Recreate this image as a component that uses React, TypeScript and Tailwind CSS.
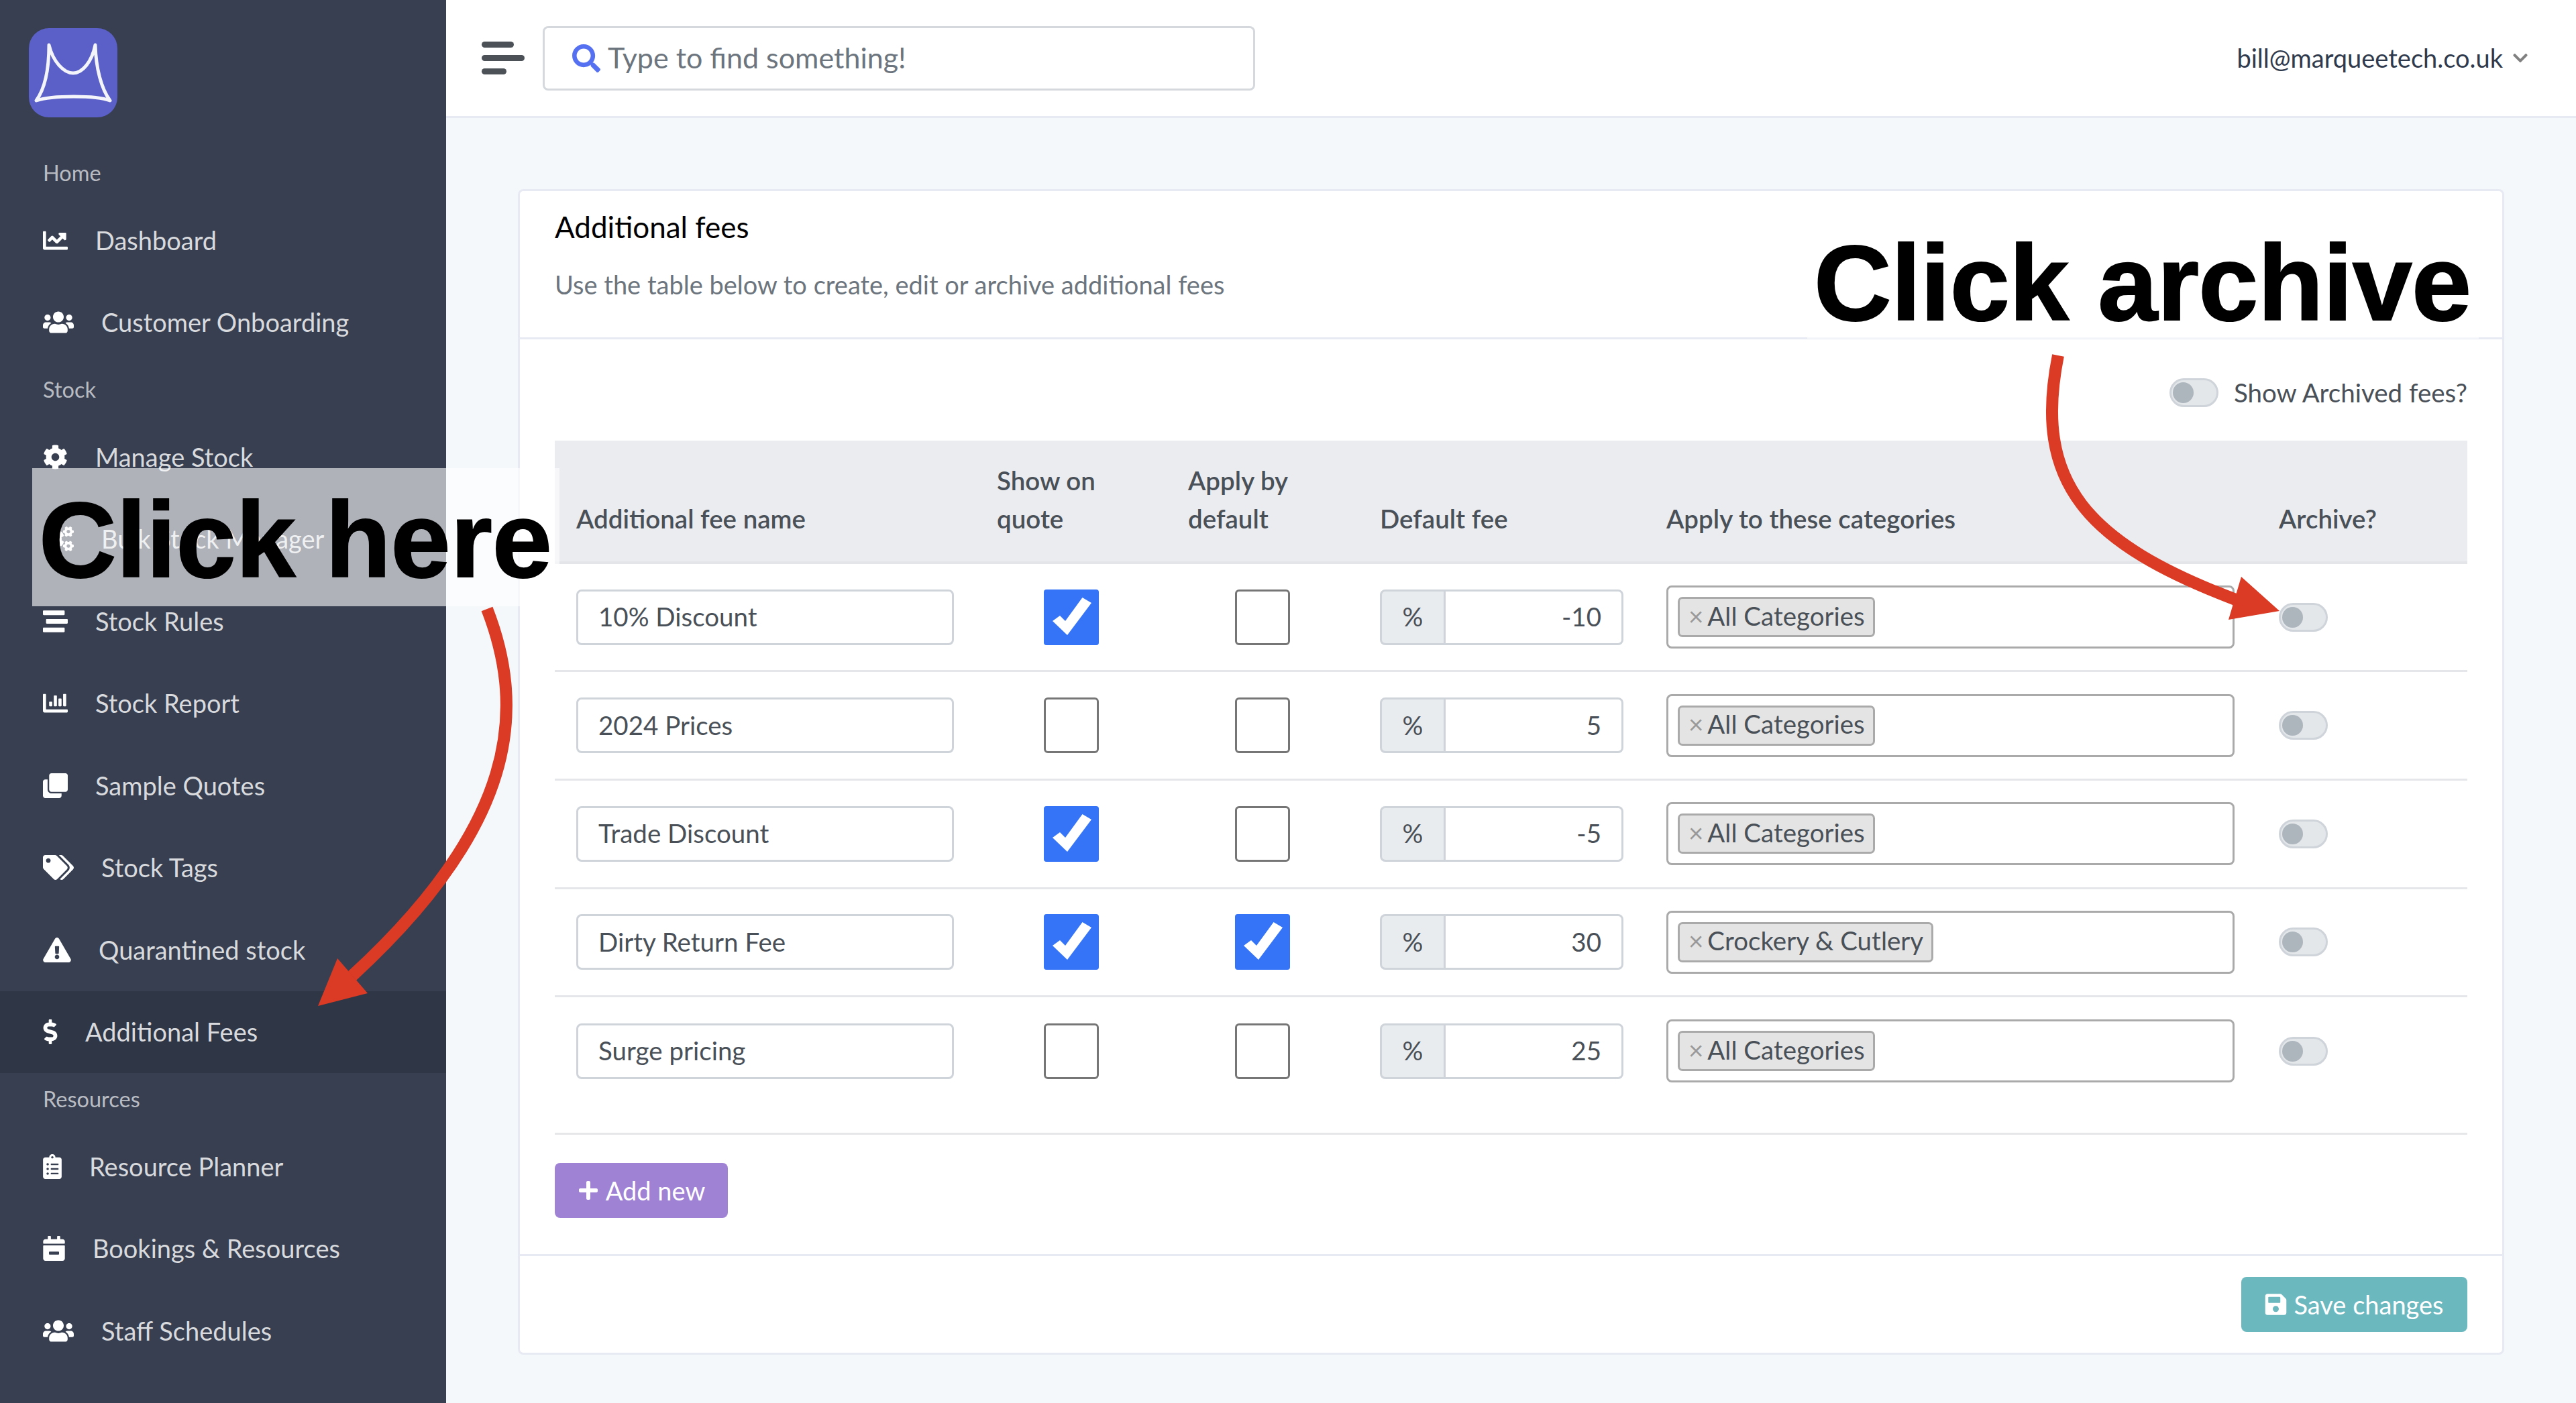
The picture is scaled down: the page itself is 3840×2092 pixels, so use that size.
import React from "react";
import {
	FaCalendarMinus,
	FaChartBar,
	FaChartLine,
	FaChevronDown,
	FaClipboardList,
	FaClone,
	FaCog,
	FaCogs,
	FaDollarSign,
	FaExclamationTriangle,
	FaPlus,
	FaSave,
	FaSearch,
	FaStream,
	FaTags,
	FaUsers,
} from "react-icons/fa";

type NavEntry =
	| { section: string }
	| {
			label: string;
			icon: React.ComponentType<{ className?: string }>;
			iconWidth: string;
			active?: boolean;
	  };

const nav: NavEntry[] = [
	{ section: "Home" },
	{ label: "Dashboard", icon: FaChartLine, iconWidth: "w-[37px]" },
	{ label: "Customer Onboarding", icon: FaUsers, iconWidth: "w-[46px]" },
	{ section: "Stock" },
	{ label: "Manage Stock", icon: FaCog, iconWidth: "w-[37px]" },
	{ label: "Bulk Stock Manager", icon: FaCogs, iconWidth: "w-[46px]" },
	{ label: "Stock Rules", icon: FaStream, iconWidth: "w-[37px]" },
	{ label: "Stock Report", icon: FaChartBar, iconWidth: "w-[37px]" },
	{ label: "Sample Quotes", icon: FaClone, iconWidth: "w-[37px]" },
	{ label: "Stock Tags", icon: FaTags, iconWidth: "w-[46px]" },
	{ label: "Quarantined stock", icon: FaExclamationTriangle, iconWidth: "w-[42px]" },
	{ label: "Additional Fees", icon: FaDollarSign, iconWidth: "w-[22px]", active: true },
	{ section: "Resources" },
	{ label: "Resource Planner", icon: FaClipboardList, iconWidth: "w-[28px]" },
	{ label: "Bookings & Resources", icon: FaCalendarMinus, iconWidth: "w-[33px]" },
	{ label: "Staff Schedules", icon: FaUsers, iconWidth: "w-[46px]" },
];

const fees = [
	{ name: "10% Discount", quote: true, apply: false, fee: "-10", category: "All Categories" },
	{ name: "2024 Prices", quote: false, apply: false, fee: "5", category: "All Categories" },
	{ name: "Trade Discount", quote: true, apply: false, fee: "-5", category: "All Categories" },
	{ name: "Dirty Return Fee", quote: true, apply: true, fee: "30", category: "Crockery & Cutlery" },
	{ name: "Surge pricing", quote: false, apply: false, fee: "25", category: "All Categories" },
];

function Logo() {
	return (
		<svg viewBox="0 0 132 133" className="w-[132px] h-[133px]">
			<rect width="132" height="133" rx="30" fill="#5a60c7" />
			<path
				d="M30 25C36 50 52 67 66 67C80 67 94 50 99 25C100 60 108 90 121 108C100 100 35 100 11 108C24 90 30 60 30 25Z"
				fill="none"
				stroke="#f4f4fb"
				strokeWidth="5"
				strokeLinejoin="round"
			/>
		</svg>
	);
}

function Sidebar() {
	return (
		<aside className="w-[665px] shrink-0 bg-[#373f50]">
			<div className="h-[219px] pt-[42px] pl-[43px]">
				<Logo />
			</div>
			{nav.map((item) =>
				"section" in item ? (
					<div
						key={item.section}
						className="h-[78px] pl-[64px] flex items-center text-[32.5px] text-[#b9bcc3]"
					>
						{item.section}
					</div>
				) : (
					<div
						key={item.label}
						className={
							"h-[122.5px] pl-[64px] flex items-center gap-[41px] text-[38px] text-[#d8dade] " +
							(item.active ? "bg-[#2f3645]" : "")
						}
					>
						<item.icon className={"h-[37px] shrink-0 text-white " + item.iconWidth} />
						<span>{item.label}</span>
					</div>
				)
			)}
		</aside>
	);
}

function Toggle() {
	return (
		<div className="w-[73px] h-[43px] rounded-full border-[3px] border-[#ced4da] bg-[#e4e7ea] flex items-center pl-[2px]">
			<div className="w-[31px] h-[31px] rounded-full bg-[#adb5bd]" />
		</div>
	);
}

function Checkbox({ checked }: { checked: boolean }) {
	if (checked) {
		return (
			<div className="w-[82px] h-[83px] mx-auto rounded-[4px] bg-[#3574f6]">
				<svg viewBox="0 0 82 83" className="w-[82px] h-[83px]">
					<path d="M13 47L35 68L71 20L57.5 12L32 47L24 39Z" fill="#fff" />
				</svg>
			</div>
		);
	}
	return <div className="w-[82px] h-[83px] mx-auto rounded-[6px] border-[3px] border-[#767676] bg-white" />;
}

function FeeRow({ fee }: { fee: (typeof fees)[number] }) {
	return (
		<tr className="h-[161.6px] border-b-[3px] border-[#e4e6e9] last:border-b-0 text-[38.5px]">
			<td className="px-[32px]">
				<div className="w-[563px] h-[83px] rounded-[8px] border-[3px] border-[#ced4da] pl-[30px] flex items-center text-[#495057]">
					{fee.name}
				</div>
			</td>
			<td>
				<Checkbox checked={fee.quote} />
			</td>
			<td>
				<Checkbox checked={fee.apply} />
			</td>
			<td className="px-[32px]">
				<div className="flex w-[363px] h-[83px] text-[#495057]">
					<div className="w-[98px] rounded-l-[8px] border-[3px] border-[#ced4da] bg-[#e9ecef] flex items-center justify-center">
						%
					</div>
					<div className="flex-1 rounded-r-[8px] border-[3px] border-l-0 border-[#ced4da] pr-[30px] flex items-center justify-end">
						{fee.fee}
					</div>
				</div>
			</td>
			<td className="px-[32px]">
				<div className="w-[847px] h-[94px] rounded-[8px] border-[3px] border-[#aaaaaa] pl-[14px] flex items-center">
					<div className="h-[60px] pl-[13px] pr-[12px] pb-[3px] rounded-[7px] border-[3px] border-[#aaaaaa] bg-[#e4e4e4] flex items-center gap-[6px] text-[38.5px] text-[#495057]">
						<span className="text-[#999999]">×</span>
						{fee.category}
					</div>
				</div>
			</td>
			<td className="px-[32px]">
				<Toggle />
			</td>
		</tr>
	);
}

function FeesCard() {
	return (
		<section className="rounded-[8px] border-[3px] border-[#e8eaf3] bg-white">
			<div className="h-[221px] border-b-[3px] border-[#e8eaf3] px-[52px] pt-[26px]">
				<h1 className="text-[44px] leading-[54px] text-black">Additional fees</h1>
				<p className="mt-[32px] text-[#6c757d] leading-[54px]">
					Use the table below to create, edit or archive additional fees
				</p>
			</div>
			<div className="px-[52px] pt-[51px] pb-[54px]">
				<div className="flex items-center justify-end gap-[23px] text-[38.5px] text-[#495057]">
					<Toggle />
					<span>Show Archived fees?</span>
				</div>
				<table className="mt-[42px] w-[2851px] table-fixed border-collapse">
					<thead>
						<tr className="h-[182.5px] bg-[#ebecf0] border-b-[4px] border-[#e3e5e9] text-left align-bottom text-[38.5px] text-[#495057] leading-[57px]">
							<th className="w-[627px] px-[32px] pb-[35px] font-semibold">Additional fee name</th>
							<th className="w-[285px] px-[32px] pb-[35px] font-semibold">
								Show on
								<br />
								quote
							</th>
							<th className="w-[286px] px-[32px] pb-[35px] font-semibold">
								Apply by
								<br />
								default
							</th>
							<th className="w-[427px] px-[32px] pb-[35px] font-semibold">Default fee</th>
							<th className="w-[913px] px-[32px] pb-[35px] font-semibold">Apply to these categories</th>
							<th className="w-[313px] px-[32px] pb-[35px] font-semibold">Archive?</th>
						</tr>
					</thead>
					<tbody>
						{fees.map((fee) => (
							<FeeRow key={fee.name} fee={fee} />
						))}
					</tbody>
				</table>
				<div className="mt-[42px] border-t-[3px] border-[#e5e7e9] pt-[42px]">
					<button className="w-[258px] h-[82px] rounded-[8px] bg-[#a082d5] text-white flex items-center justify-center gap-[10px]">
						<FaPlus className="h-[32px] w-[32px]" />
						Add new
					</button>
				</div>
			</div>
			<div className="border-t-[3px] border-[#e8eaf3] px-[52px] py-[31px] flex justify-end">
				<button className="w-[337px] h-[82px] rounded-[8px] bg-[#6cb8bf] text-white flex items-center justify-center gap-[10px]">
					<FaSave className="h-[36px] w-[33px]" />
					Save changes
				</button>
			</div>
		</section>
	);
}

function Annotations() {
	return (
		<div className="absolute inset-0 pointer-events-none">
			<div className="absolute left-[48px] top-[698px] w-[786px] h-[206px] bg-white/60 flex items-center pl-[10px] pt-[8px] font-['Liberation_Sans',sans-serif] font-bold text-[160px] leading-none [-webkit-text-stroke:2px_black] text-black">
				Click here
			</div>
			<div className="absolute left-[2694px] top-[330px] w-[1001px] h-[175px] bg-white/60 flex items-center pl-[10px] pt-[8px] font-['Liberation_Sans',sans-serif] font-bold text-[160px] leading-none tracking-[-0.6px] [-webkit-text-stroke:2px_black] text-black">
				Click archive
			</div>
			<svg viewBox="0 0 3840 2092" className="absolute inset-0 w-[3840px] h-[2092px]">
				<path d="M726 908C785 1060 770 1230 525 1455" fill="none" stroke="#db3a24" strokeWidth="18" />
				<polygon points="474,1500 503,1429 548,1481" fill="#db3a24" />
				<path d="M3068 530C3030 720 3110 810 3335 895" fill="none" stroke="#db3a24" strokeWidth="18" />
				<polygon points="3398,911 3341,860 3322,924" fill="#db3a24" />
			</svg>
		</div>
	);
}

export default function App() {
	return (
		<div className="relative flex w-[3840px] h-[2092px] overflow-hidden bg-[#f5f8fb] font-['Lato',sans-serif] text-[38px]">
			<Sidebar />
			<div className="flex-1 min-w-0">
				<header className="h-[176px] border-b-[3px] border-[#e8eaf3] bg-white pl-[53px] pr-[72px] flex items-center">
					<div className="flex flex-col gap-[11px]">
						<div className="w-[48px] h-[9px] rounded-full bg-[#4b5157]" />
						<div className="w-[64px] h-[9px] rounded-full bg-[#4b5157]" />
						<div className="w-[37px] h-[9px] rounded-full bg-[#4b5157]" />
					</div>
					<div className="ml-[27px] w-[1062px] h-[96px] rounded-[8px] border-[3px] border-[#d5d9dd] pl-[41px] flex items-center gap-[11px] text-[43px] text-[#6c757d]">
						<FaSearch className="h-[42px] w-[42px] text-[#5570f1]" />
						Type to find something!
					</div>
					<div className="ml-auto flex items-center gap-[15px] text-[#2f3a4d]">
						bill@marqueetech.co.uk
						<FaChevronDown className="h-[25px] w-[22px] text-[#808080]" />
					</div>
				</header>
				<main className="px-[107px] pt-[106px]">
					<FeesCard />
				</main>
			</div>
			<Annotations />
		</div>
	);
}
